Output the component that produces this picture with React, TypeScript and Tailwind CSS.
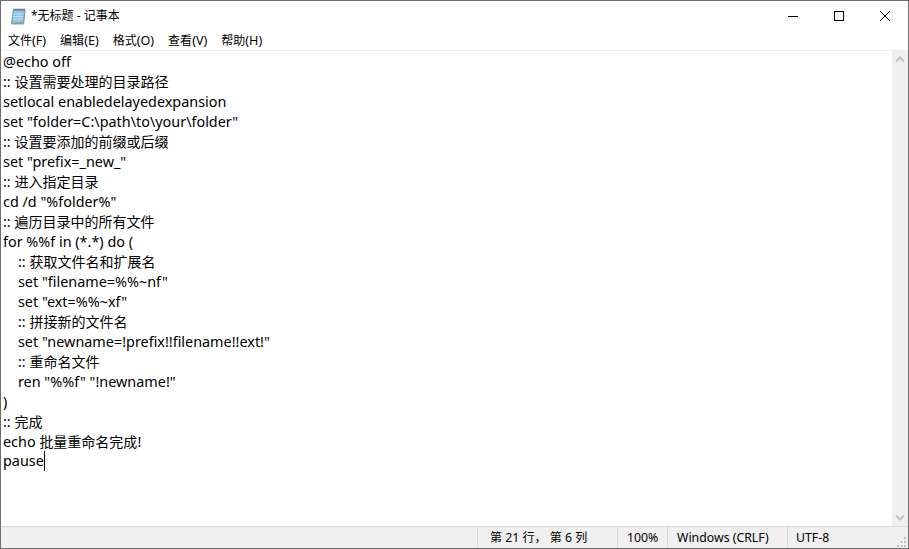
const MENU = ['文件(F)', '编辑(E)', '格式(O)', '查看(V)', '帮助(H)']

const LINES = [
  '@echo off',
  ':: 设置需要处理的目录路径',
  'setlocal enabledelayedexpansion',
  'set "folder=C:\\path\\to\\your\\folder"',
  ':: 设置要添加的前缀或后缀',
  'set "prefix=_new_"',
  ':: 进入指定目录',
  'cd /d "%folder%"',
  ':: 遍历目录中的所有文件',
  'for %%f in (*.*) do (',
  '    :: 获取文件名和扩展名',
  '    set "filename=%%~nf"',
  '    set "ext=%%~xf"',
  '    :: 拼接新的文件名',
  '    set "newname=!prefix!!filename!!ext!"',
  '    :: 重命名文件',
  '    ren "%%f" "!newname!"',
  ')',
  ':: 完成',
  'echo 批量重命名完成!',
]

// latin and cjk runs have different sizes in the original font
function Mixed({ text, cjk, latin }: { text: string; cjk: string; latin: string }) {
  const parts = text.split(/([\u4e00-\u9fff，]+)/).filter(Boolean)
  return (
    <>
      {parts.map((p, i) => (
        <span key={i} className={/[\u4e00-\u9fff，]/.test(p) ? cjk : latin}>{p}</span>
      ))}
    </>
  )
}

function NotepadIcon() {
  return (
    <svg width="16" height="17" viewBox="0 0 16 17" className="flex-shrink-0">
      <path d="M3.500 2.500h12l-1.500 14H1z" fill="#b79f6f" />
      <path d="M3.500 1.500h11.500l-1.500 13.500H1.500z" fill="#8fc6e6" stroke="#6f9db8" />
      <path d="M3.500 6h9.500M3.200 8.500h9.500M3 11h9.500" stroke="#c4e3f4" />
      <path d="M4 0.500v2.500M6 0.500v2.500M8 0.500v2.500M10 0.500v2.500M12 0.500v2.500M14 0.500v2.500" stroke="#5f6b73" />
    </svg>
  )
}

export default function App() {
  return (
    <div className="w-[909px] h-[549px] flex flex-col bg-white border border-[#6e6e6e] overflow-hidden font-['Noto_Sans','Noto_Sans_CJK_SC',sans-serif] text-black">
      <div className="h-[30px] flex items-center flex-shrink-0">
        <div className="flex items-center gap-[5px] pl-[9px]">
          <NotepadIcon />
          <span className="text-[12px]">*无标题 - 记事本</span>
        </div>
        <div className="ml-auto flex">
          <div className="w-[46px] h-[30px] flex items-center justify-center">
            <svg width="10" height="10" viewBox="0 0 10 10" shapeRendering="crispEdges">
              <path d="M0 5.500h10" stroke="#000" />
            </svg>
          </div>
          <div className="w-[46px] h-[30px] flex items-center justify-center">
            <svg width="10" height="10" viewBox="0 0 10 10" shapeRendering="crispEdges">
              <path d="M0.500 0.500h9v9h-9z" fill="none" stroke="#000" />
            </svg>
          </div>
          <div className="w-[46px] h-[30px] flex items-center justify-center">
            <svg width="10" height="10" viewBox="0 0 10 10">
              <path d="M0 0l10 10M10 0L0 10" stroke="#000" strokeWidth="1" />
            </svg>
          </div>
        </div>
      </div>
      <div className="h-[19px] flex items-center gap-[14px] pl-[7px] text-[12px] leading-[16px] flex-shrink-0">
        {MENU.map((m) => (
          <span key={m}>
            <Mixed text={m} cjk="text-[12px]" latin="text-[12.6px]" />
          </span>
        ))}
      </div>
      <div className="flex-1 min-h-0 flex border-t border-[#f0f0f0]">
        <div className="flex-1 pl-[2px] leading-[20px] whitespace-pre">
          {LINES.map((l) => (
            <div key={l} className="h-[20px]">
              <Mixed text={l} cjk="text-[14px]" latin="text-[14.4px]" />
            </div>
          ))}
          <div className="h-[20px] flex text-[14.4px]">
            pause
            <span className="w-px h-[20px] bg-black" />
          </div>
        </div>
        <div className="w-[16px] bg-[#f0f0f0] flex flex-col justify-between items-center">
          <svg width="16" height="17" viewBox="0 0 16 17">
            <path d="M4 10.500l4-4 4 4" fill="none" stroke="#c4c4c4" strokeWidth="2" />
          </svg>
          <svg width="16" height="17" viewBox="0 0 16 17">
            <path d="M4 6.500l4 4 4-4" fill="none" stroke="#c4c4c4" strokeWidth="2" />
          </svg>
        </div>
      </div>
      <div className="h-[22px] flex items-center bg-[#f0f0f0] border-t border-[#d7d7d7] text-[12.3px] leading-[16px] flex-shrink-0">
        <div className="flex-1 h-full" />
        <div className="w-[140px] h-full flex items-center pl-[12px] pt-px border-l border-[#d7d7d7] whitespace-pre">
          <span>
            <Mixed text="第 21 行， 第 6 列" cjk="text-[12px]" latin="text-[12.3px]" />
          </span>
        </div>
        <div className="w-[50px] h-full flex items-center pl-[9px] pt-px border-l border-[#d7d7d7]">100%</div>
        <div className="w-[120px] h-full flex items-center pl-[9px] pt-px border-l border-[#d7d7d7]">Windows (CRLF)</div>
        <div className="w-[121px] h-full relative flex items-center pl-[8px] pt-px border-l border-[#d7d7d7]">
          UTF-8
          <svg width="12" height="12" viewBox="0 0 12 12" className="absolute right-[1px] bottom-[1px]">
            <path d="M9 2h2v2H9zM5.500 6h2v2h-2zM9 6h2v2H9zM2 10h2v2H2zM5.500 10h2v2h-2zM9 10h2v2H9z" fill="#c0c0c0" />
          </svg>
        </div>
      </div>
    </div>
  )
}
